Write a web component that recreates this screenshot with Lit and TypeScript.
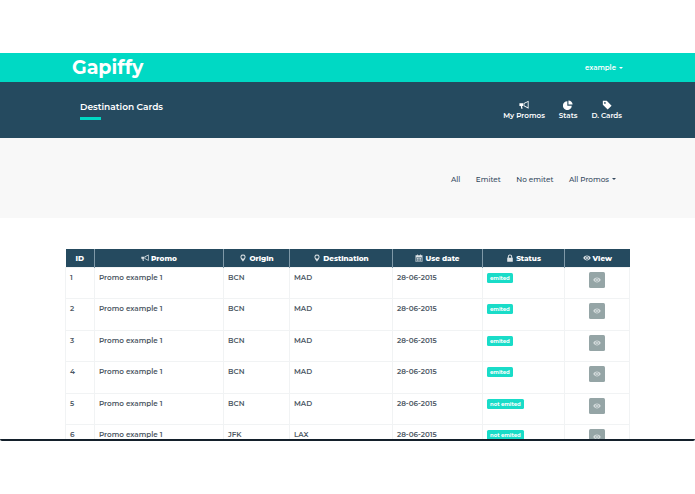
import { LitElement, html, css, svg } from "lit";
import { customElement } from "lit/decorators.js";

const megaphone = svg`<path d="M.5 4h4.300v3.200H3.700l.6 3.300H2.700L2.100 7.200H.5z"/><path fill-rule="evenodd" d="M5.400 3.900 11.500.8v9.600L5.400 7.300zm1 .7v2.100l4.100 2.100V2.500z"/>`;
const pin = svg`<path fill-rule="evenodd" d="M6 .8a3.800 3.800 0 0 1 3.800 3.800C9.800 7 6 11.500 6 11.500S2.200 7 2.200 4.600A3.800 3.800 0 0 1 6 .8zm0 1.400a2.400 2.400 0 1 0 0 4.800 2.400 2.400 0 0 0 0-4.800z"/>`;
const calendar = svg`<path fill-rule="evenodd" d="M.8 2h2.200V.8h1.200V2h3.600V.8H9V2h2.200v9.700H.8zm1 3.200v5.500h8.400V5.200z"/><path d="M2.600 6h1.700v1.800H2.600zm2.500 0h1.800v1.800H5.100zm2.600 0h1.700v1.800H7.700zM2.600 8.400h1.700v1.600H2.600zm2.500 0h1.800v1.600H5.100zm2.600 0h1.700v1.600H7.700z"/>`;
const lock = svg`<path fill-rule="evenodd" d="M2.700 5.500V4a3.300 3.300 0 0 1 6.600 0v1.500h.9v6H1.800v-6zm1.500 0h3.600V4a1.800 1.800 0 0 0-3.600 0z"/>`;
const eye = svg`<path fill-rule="evenodd" d="M.3 6C1.900 3.600 3.800 2.400 6 2.400S10.100 3.600 11.700 6C10.100 8.400 8.200 9.600 6 9.600S1.900 8.400.3 6zm5.700-2.600a2.600 2.600 0 1 0 0 5.200 2.600 2.600 0 0 0 0-5.200z"/><circle cx="6" cy="6" r="1.500"/>`;
const pie = svg`<path d="M5.200 1.500v5.300h5.300A5.300 5.300 0 1 1 5.200 1.500z"/><path d="M6.500.5a5 5 0 0 1 5 5h-5z"/>`;
const tag = svg`<path fill-rule="evenodd" d="M1 1h4.700l5.800 5.800-4.700 4.700L1 5.700zm2.500 1.500a1 1 0 1 0 0 2 1 1 0 0 0 0-2z"/>`;

const icon = (p: unknown) => html`<svg class="icon" viewBox="0 0 12 12" fill="currentColor">${p}</svg>`;

type Row = [number, string, string, string];
const rows: Row[] = [
  [1, "BCN", "MAD", "emited"],
  [2, "BCN", "MAD", "emited"],
  [3, "BCN", "MAD", "emited"],
  [4, "BCN", "MAD", "emited"],
  [5, "BCN", "MAD", "not emited"],
  [6, "JFK", "LAX", "not emited"],
];

@customElement("app-root")
export class AppRoot extends LitElement {
  static styles = css`
    :host {
      display: block;
      width: 695px;
      height: 494px;
      background: #fff;
      font-family: "Montserrat", Inter, "Liberation Sans", sans-serif;
      overflow: hidden;
    }
    .frame {
      margin-top: 53px;
      height: 388px;
      box-sizing: border-box;
      border-bottom: 2px solid #14202b;
      border-radius: 0 0 2px 2px;
      overflow: hidden;
      display: flex;
      flex-direction: column;
    }
    .brand {
      flex: none;
      height: 29px;
      background: #00d9c4;
      color: #fff;
      display: flex;
      align-items: center;
      justify-content: space-between;
      padding: 0 72px;
    }
    .logo {
      font-size: 19px;
      font-weight: 700;
      line-height: 29px;
      margin-top: -1px;
    }
    .user {
      font-size: 7px;
      font-weight: 600;
      display: flex;
      align-items: center;
      gap: 3px;
    }
    .caret {
      width: 0;
      height: 0;
      border-left: 2px solid transparent;
      border-right: 2px solid transparent;
      border-top: 2px solid currentColor;
    }
    .nav {
      flex: none;
      height: 56px;
      background: #254a5f;
      color: #fff;
      display: flex;
      justify-content: space-between;
      padding: 0 73px 0 80px;
    }
    .title {
      padding-top: 19px;
      font-size: 9px;
      font-weight: 600;
      line-height: 12px;
    }
    .title::after {
      content: "";
      display: block;
      width: 21px;
      height: 3px;
      margin-top: 4px;
      background: #00d9c4;
    }
    .links {
      display: flex;
      gap: 14px;
      padding-top: 18px;
    }
    .link {
      display: flex;
      flex-direction: column;
      align-items: center;
      font-size: 7.200px;
      font-weight: 600;
      line-height: 9px;
    }
    .link .icon {
      width: 10px;
      height: 10px;
      margin-bottom: 1px;
    }
    .filters {
      flex: none;
      height: 80px;
      padding-top: 2px;
      box-sizing: border-box;
      background: #f8f8f8;
      color: #34495e;
      display: flex;
      justify-content: flex-end;
      align-items: center;
      gap: 15.500px;
      padding-right: 79px;
      font-size: 7.300px;
      font-weight: 500;
    }
    .filters .drop {
      display: flex;
      align-items: center;
      gap: 3px;
    }
    .content {
      flex: 1;
      min-height: 0;
      padding: 31px 65px 0 65px;
    }
    table {
      width: 564px;
      table-layout: fixed;
      border-collapse: collapse;
      font-size: 7.200px;
      color: #4d5864;
    }
    th {
      height: 18px;
      padding: 0;
      background: #254a5f;
      color: #fff;
      font-size: 7.300px;
      font-weight: 800;
      border-left: 1px solid #7f99a8;
      white-space: nowrap;
    }
    th:first-child {
      border-left: none;
    }
    th .icon {
      width: 8px;
      height: 8px;
      margin-right: 2px;
      vertical-align: -1px;
      opacity: 0.85;
    }
    td {
      height: 31.400px;
      box-sizing: border-box;
      padding: 5px 4px 0;
      vertical-align: top;
      border: 1px solid #f1f3f4;
      font-weight: 600;
      line-height: 10px;
      white-space: nowrap;
    }
    td.action {
      text-align: center;
      padding-top: 4px;
    }
    .badge {
      display: inline-block;
      background: #19dcc8;
      color: #fff;
      font-size: 5.300px;
      font-weight: 700;
      line-height: 10px;
      padding: 0 3px;
      border-radius: 1.500px;
    }
    .view {
      display: inline-flex;
      align-items: center;
      justify-content: center;
      width: 16px;
      height: 16px;
      border-radius: 1.500px;
      background: #95a5a6;
      color: #d5dcdd;
    }
    .view .icon {
      width: 8px;
      height: 8px;
    }
  `;

  render() {
    return html`
      <div class="frame">
        <header class="brand">
          <span class="logo">Gapiffy</span>
          <span class="user">example <i class="caret"></i></span>
        </header>
        <nav class="nav">
          <div class="title">Destination Cards</div>
          <div class="links">
            <div class="link">${icon(megaphone)}My Promos</div>
            <div class="link">${icon(pie)}Stats</div>
            <div class="link">${icon(tag)}D. Cards</div>
          </div>
        </nav>
        <div class="filters">
          <span>All</span>
          <span>Emitet</span>
          <span>No emitet</span>
          <span class="drop">All Promos <i class="caret"></i></span>
        </div>
        <main class="content">
          <table>
            <colgroup>
              <col style="width:29px" /><col style="width:129px" /><col style="width:66px" /><col style="width:103px" />
              <col style="width:90px" /><col style="width:82px" /><col style="width:65px" />
            </colgroup>
            <thead>
              <tr>
                <th>ID</th>
                <th>${icon(megaphone)}Promo</th>
                <th>${icon(pin)}Origin</th>
                <th>${icon(pin)}Destination</th>
                <th>${icon(calendar)}Use date</th>
                <th>${icon(lock)}Status</th>
                <th>${icon(eye)}View</th>
              </tr>
            </thead>
            <tbody>
              ${rows.map(
                ([id, from, to, status]) => html`
                  <tr>
                    <td>${id}</td>
                    <td>Promo example 1</td>
                    <td>${from}</td>
                    <td>${to}</td>
                    <td>28-06-2015</td>
                    <td><span class="badge">${status}</span></td>
                    <td class="action"><span class="view">${icon(eye)}</span></td>
                  </tr>
                `
              )}
            </tbody>
          </table>
        </main>
      </div>
    `;
  }
}
